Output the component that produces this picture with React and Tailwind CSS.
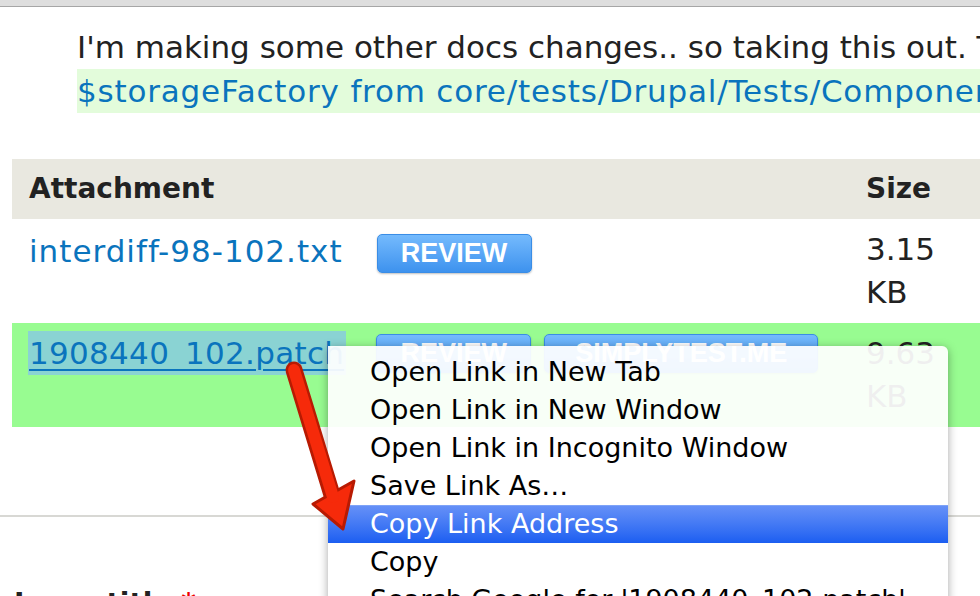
import React from "react";

const menuItems = [
  "Open Link in New Tab",
  "Open Link in New Window",
  "Open Link in Incognito Window",
  "Save Link As…",
  "Copy Link Address",
  "Copy",
  "Search Google for '1908440_102.patch'",
];

const ReviewButton = ({ label, width }) => (
  <span
    className={`inline-flex h-[39px] items-center justify-center rounded-[5px] border border-[#3a8de6] bg-gradient-to-b from-[#74bafd] to-[#3d92ee] font-['Liberation_Sans',sans-serif] text-[27px] font-bold text-white shadow-[0_1px_2px_rgba(0,0,0,0.25)] ${width}`}
  >
    {label}
  </span>
);

const App = () => {
  return (
    <div className="relative h-[596px] w-[980px] overflow-hidden bg-white font-['DejaVu_Sans',sans-serif] text-[31px] text-[#222]">
      {/* browser chrome strip */}
      <div className="h-[7px] border-b border-[#a6a6a6] bg-[#dedede]" />

      {/* comment body */}
      <div className="mt-[18px] pl-[77px]">
        <div className="whitespace-nowrap leading-[44px]">
          I'm making some other docs changes.. so taking this out. The
        </div>
        <div className="whitespace-nowrap bg-[#e3fcdb] leading-[44px] tracking-[0.8px] text-[#0a74bd]">
          $storageFactory from core/tests/Drupal/Tests/Component/PhpStorage
        </div>
      </div>

      {/* attachments table */}
      <div className="ml-[12px] mt-[46px]">
        <div className="grid h-[60px] grid-cols-[837px_1fr] items-center bg-[#e9e8e0] text-[28px] font-bold">
          <div className="pl-[17px]">Attachment</div>
          <div className="pl-[17px]">Size</div>
        </div>

        <div className="grid h-[104px] grid-cols-[837px_1fr] bg-white pt-[9px]">
          <div className="flex items-center self-start pl-[17px]">
            <a className="inline-block leading-[43px] tracking-[1px] text-[#0a74bd]">interdiff-98-102.txt</a>
            <span className="ml-[34px]">
              <ReviewButton label="REVIEW" width="w-[155px]" />
            </span>
          </div>
          <div className="w-[100px] pl-[17px] leading-[43px]">3.15 KB</div>
        </div>

        <div className="grid h-[104px] grid-cols-[837px_1fr] bg-[#98fc91] pt-[8px]">
          <div className="flex items-center self-start pl-[16px]">
            <a className="inline-block bg-[#8ad3d3] pl-[1px] pr-[2px] leading-[44px] tracking-[0.3px] text-[#0a74bd] underline decoration-2 underline-offset-[5px]">
              1908440_102.patch
            </a>
            <span className="ml-[30px] flex gap-[13px]">
              <ReviewButton label="REVIEW" width="w-[155px]" />
              <ReviewButton label="SIMPLYTEST.ME" width="w-[274px]" />
            </span>
          </div>
          <div className="w-[100px] pl-[17px] pt-[1px] leading-[43px]">9.63 KB</div>
        </div>
      </div>

      <div className="mt-[88px] border-t-2 border-[#d8d8d4]" />

      <div className="mt-[67px] whitespace-nowrap pl-[14px] text-[28px] font-bold leading-[40px]">
        Issue title <span className="text-[#e00]">*</span>
      </div>

      {/* context menu */}
      <div className="absolute left-[328px] top-[346px] w-[620px] rounded-tr-[6px] bg-white/[0.93] pt-[7px] text-[27px] text-black shadow-[0_2px_10px_rgba(0,0,0,0.35)]">
        {menuItems.map((item) =>
          item === "Copy Link Address" ? (
            <div
              key={item}
              className="h-[38px] whitespace-nowrap border-t border-[#7ea3f8] bg-gradient-to-b from-[#6590f7] to-[#1b5ef1] pl-[42px] leading-[36px] text-white"
            >
              {item}
            </div>
          ) : (
            <div key={item} className="h-[38px] whitespace-nowrap pl-[42px] leading-[38px]">
              {item}
            </div>
          )
        )}
      </div>

      {/* red annotation arrow */}
      <svg
        className="pointer-events-none absolute left-[280px] top-[355px]"
        width="90"
        height="185"
        viewBox="0 0 90 185"
      >
        <line x1="14" y1="15" x2="52" y2="140" stroke="#b81a02" strokeWidth="17" strokeLinecap="round" />
        <path d="M33 149 L74 126 L63 174 Z" fill="#f62a0a" stroke="#b81a02" strokeWidth="3" strokeLinejoin="round" />
        <line x1="14" y1="15" x2="53" y2="142" stroke="#f62a0a" strokeWidth="12" strokeLinecap="round" />
      </svg>
    </div>
  );
};

export default App;
